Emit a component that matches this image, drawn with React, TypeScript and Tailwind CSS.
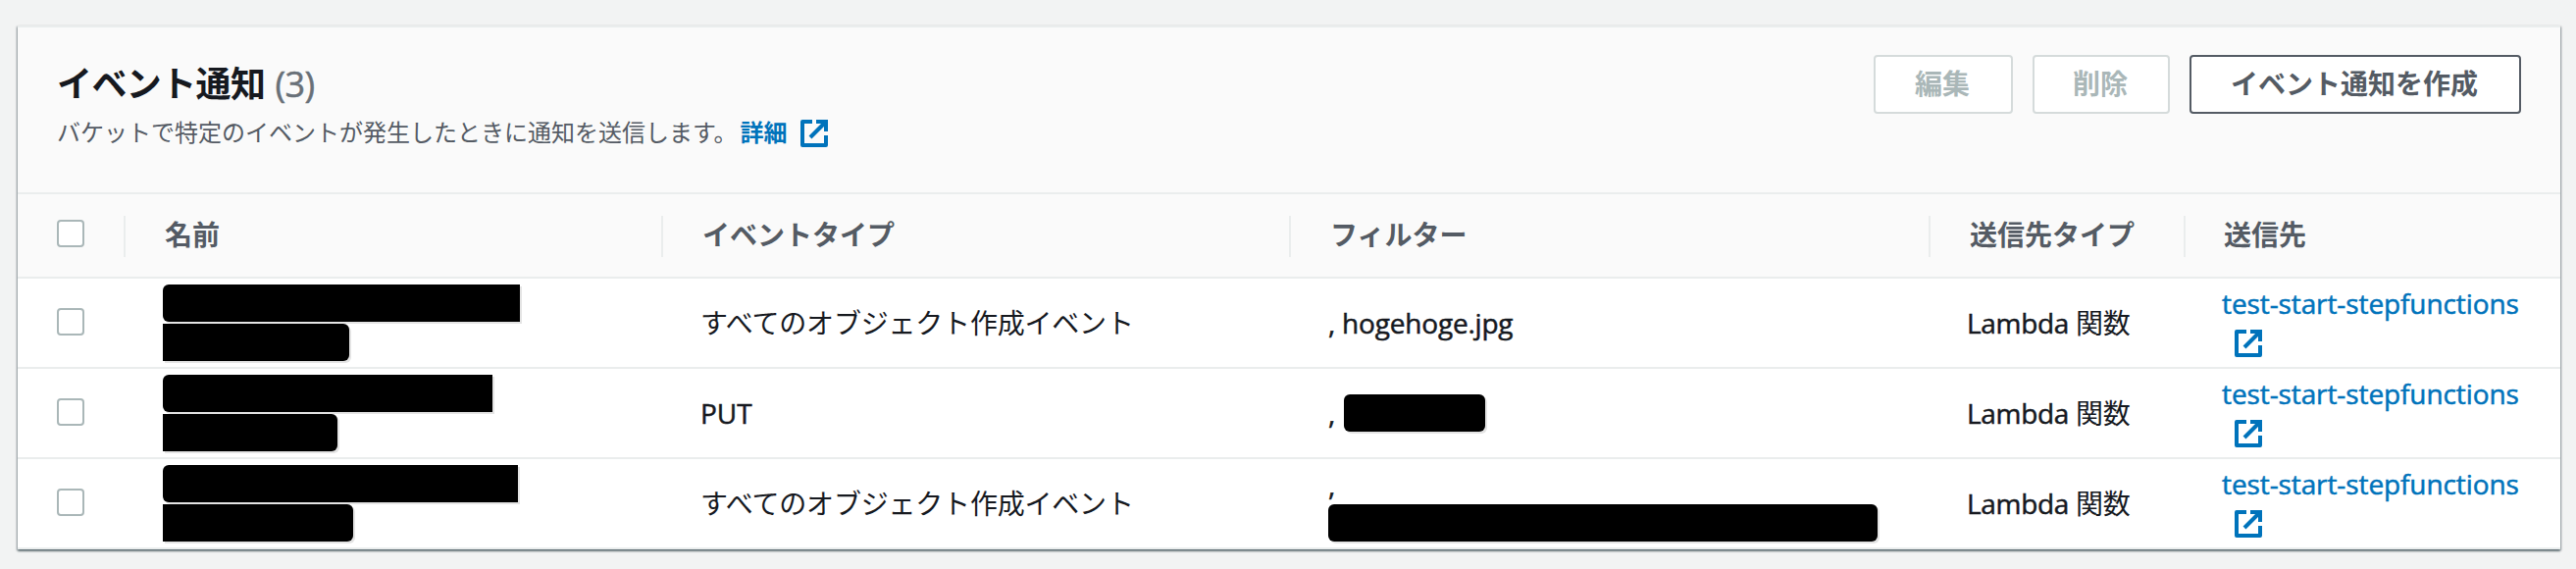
import clsx from "clsx";

type Redaction = { width: string; shape: string };

interface EventRow {
  id: number;
  name: Redaction[];
  eventType: string;
  filter: string;
  filterMask?: string;
  wraps?: boolean;
  destinationType: string;
  destination: string;
}

const rows: EventRow[] = [
  {
    id: 1,
    name: [
      { width: "w-[364px]", shape: "rounded-l-md" },
      { width: "w-[190px]", shape: "rounded-r-md" },
    ],
    eventType: "すべてのオブジェクト作成イベント",
    filter: ", hogehoge.jpg",
    destinationType: "Lambda",
    destination: "test-start-stepfunctions",
  },
  {
    id: 2,
    name: [
      { width: "w-[336px]", shape: "rounded-l-md" },
      { width: "w-[178px]", shape: "rounded-r-md" },
    ],
    eventType: "PUT",
    filter: ",",
    filterMask: "w-[144px]",
    destinationType: "Lambda",
    destination: "test-start-stepfunctions",
  },
  {
    id: 3,
    name: [
      { width: "w-[362px]", shape: "rounded-l-md" },
      { width: "w-[194px]", shape: "rounded-r-md" },
    ],
    eventType: "すべてのオブジェクト作成イベント",
    filter: ",",
    filterMask: "w-[560px]",
    wraps: true,
    destinationType: "Lambda",
    destination: "test-start-stepfunctions",
  },
];

const columns = ["名前", "イベントタイプ", "フィルター", "送信先タイプ", "送信先"];
const grid = "grid grid-cols-[108px_548px_640px_652px_260px_384px]";
// slightly heavier latin glyphs
const latin = "[-webkit-text-stroke:0.5px_currentColor]";

function ExternalIcon() {
  return (
    <svg width="28" height="28" viewBox="0 0 28 28" fill="none" stroke="#0073bb" strokeWidth="4" strokeLinejoin="round">
      <path d="M12 2H2V26H26V16" />
      <path d="M16 2H26V12" strokeLinejoin="miter" />
      <path d="M25 3L10 18" />
    </svg>
  );
}

function Checkbox() {
  return <span className="block h-7 w-7 rounded-sm border-2 border-[#aab7b8] bg-white" />;
}

function Mask({ width, shape }: Redaction) {
  return <div className={clsx("h-[38px] bg-black shadow-[2px_2px_0_#e4e4e4]", width, shape)} />;
}

function Button({ label, disabled, width }: { label: string; disabled?: boolean; width: string }) {
  return (
    <button
      disabled={disabled}
      className={clsx(
        "flex h-[60px] items-center justify-center rounded-sm border-2 bg-white pr-0.5 pb-0.5 text-[28px] font-bold",
        width,
        disabled ? "border-[#d5dbdb] text-[#aab7b8]" : "border-[#545b64] text-[#545b64]",
      )}
    >
      {label}
    </button>
  );
}

export default function App() {
  return (
    <div className="h-[580px] w-[2626px] bg-[#f2f3f3] pt-[26px] pl-[18px] font-['Open_Sans','Noto_Sans_CJK_JP',sans-serif] text-[#16191f]">
      <section className="w-[2592px] border-t-2 border-[#eaeded] bg-white shadow-[0_2px_2px_0_rgba(0,28,36,0.4),1px_1px_2px_0_rgba(0,28,36,0.3),-1px_1px_2px_0_rgba(0,28,36,0.3)]">
        <header className="flex h-[170px] items-start justify-between border-b-2 border-[#eaeded] bg-[#fafafa] pt-7 pr-10 pl-10">
          <div>
            <h1 className="flex h-[60px] items-center gap-2.5 text-[36px] font-bold tracking-[-0.6px]">
              イベント通知
              <span className={clsx("text-[36px] font-normal text-[#687078]", latin)}>(3)</span>
            </h1>
            <div className="flex h-9 items-center pt-px text-[24px] text-[#545b64]">
              バケットで特定のイベントが発生したときに通知を送信します。
              <a className="ml-[3px] flex items-center gap-[13px] font-bold text-[#0073bb]">
                詳細
                <span className="pt-0.5">
                  <ExternalIcon />
                </span>
              </a>
            </div>
          </div>
          <div className="flex gap-5">
            <Button label="編集" disabled width="w-[142px]" />
            <Button label="削除" disabled width="w-[140px]" />
            <Button label="イベント通知を作成" width="w-[338px]" />
          </div>
        </header>

        <div className={clsx(grid, "h-[86px] items-center border-b-2 border-[#eaeded] bg-[#fafafa] text-[28px] font-bold text-[#545b64]")}>
          <div className="pb-1 pl-10">
            <Checkbox />
          </div>
          {columns.map((column) => (
            <div key={column} className="mt-0.5 flex h-[42px] items-center border-l-2 border-[#eaeded] pb-1 pl-10 last:pl-[39px]">
              {column}
            </div>
          ))}
        </div>

        {rows.map((row) => (
          <div key={row.id} className={clsx(grid, "h-[92px] items-center border-b-2 border-[#eaeded] text-[28px]")}>
            <div className="pb-0.5 pl-10">
              <Checkbox />
            </div>
            <div className="flex flex-col gap-0.5 pl-10">
              {row.name.map((part) => (
                <Mask key={part.width} {...part} />
              ))}
            </div>
            <div className={clsx("pl-10", row.eventType === "PUT" ? latin : "tracking-[-0.2px]")}>{row.eventType}</div>
            <div className={clsx("flex pl-10", row.wraps ? "flex-col" : "items-center gap-[9px]")}>
              <span className={clsx("tracking-[-0.2px]", latin, row.wraps && "flex h-10 items-center")}>{row.filter}</span>
              {row.filterMask && <Mask width={row.filterMask} shape="rounded-md" />}
            </div>
            <div className="pl-[39px] tracking-[-0.3px]">
              <span className={latin}>{row.destinationType}</span> 関数
            </div>
            <div className="pl-[39px] text-[#0073bb]">
              <div className={clsx("leading-10 tracking-[-0.1px]", latin)}>{row.destination}</div>
              <div className="flex h-10 items-center pt-0.5 pl-[13px]">
                <ExternalIcon />
              </div>
            </div>
          </div>
        ))}
      </section>
    </div>
  );
}
